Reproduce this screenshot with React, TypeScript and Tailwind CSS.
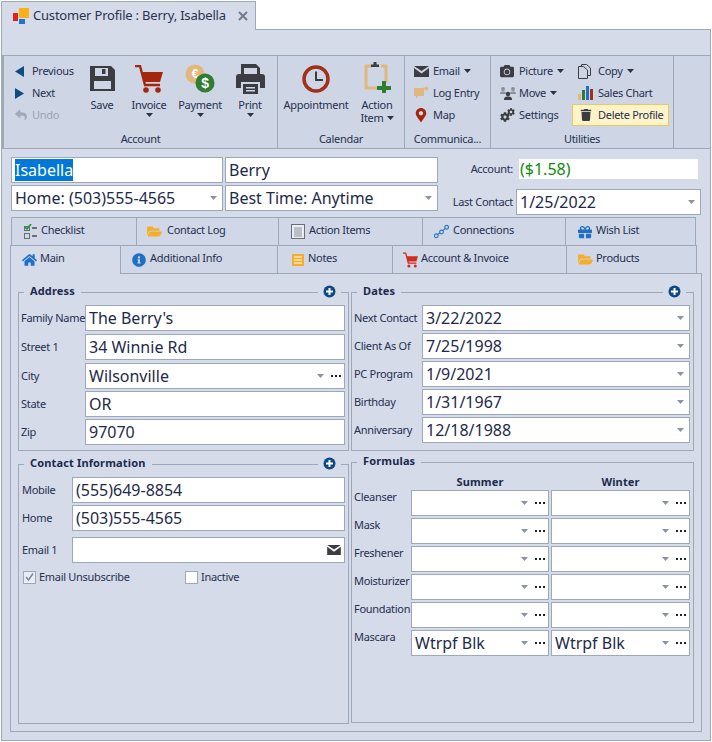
import React from "react";
import { FaHome, FaInfoCircle, FaGift, FaFolderOpen, FaReply, FaTrash, FaMapMarkerAlt, FaCamera, FaCog } from "react-icons/fa";

const Tri = ({ className = "" }: { className?: string }) => (
  <svg width="7" height="4" viewBox="0 0 7 4" className={className}><path d="M0 0h7L3.5 4z" fill="currentColor" /></svg>
);

const Cart = ({ size, color }: { size: number; color: string }) => (
  <svg width={size} height={size} viewBox="0 0 28 28">
    <path d="M0 1h5l5 19h15" fill="none" stroke={color} strokeWidth="2.400" />
    <path d="M7 7h21l-3 10H9z" fill={color} />
    <circle cx="11" cy="25" r="2.800" fill={color} />
    <circle cx="23" cy="25" r="2.800" fill={color} />
  </svg>
);
const Save = () => (
  <svg width="25" height="26" viewBox="0 0 25 26"><path fillRule="evenodd" d="M0 0h21l4 4v21H0zM5 2v8h13V2zM4 15v8h17v-8z" fill="#3b3d42" /><rect x="12" y="3" width="3.5" height="5" fill="#3b3d42" /></svg>
);
const Coins = () => (
  <svg width="30" height="29" viewBox="0 0 30 29"><circle cx="10" cy="10" r="9.5" fill="#e3b77c" /><text x="10" y="14" fontSize="12" fontWeight="700" textAnchor="middle" fill="#fff" fontFamily="Liberation Sans">€</text><circle cx="20" cy="19" r="9.5" fill="#2f7d32" /><text x="20" y="24" fontSize="14" fontWeight="700" textAnchor="middle" fill="#fff" fontFamily="Liberation Sans">$</text></svg>
);
const Printer = () => (
  <svg width="29" height="30" viewBox="0 0 29 30"><path fillRule="evenodd" d="M5 0h15l4 4v7H21V4H8v7H5z" fill="#3b3d42" /><path fillRule="evenodd" d="M3 10h23a3 3 0 0 1 3 3v11h-5v-6H5v6H0V13a3 3 0 0 1 3-3z" fill="#3b3d42" /><path fillRule="evenodd" d="M7 20h15v10H7zM10 23v1.5h9V23zM10 26v1.5h9V26z" fill="#3b3d42" /></svg>
);
const Clock = () => (
  <svg width="28" height="28" viewBox="0 0 28 28"><circle cx="14" cy="14" r="12" fill="none" stroke="#a12f1b" strokeWidth="3.5" /><path d="M14 6.5V15h7" fill="none" stroke="#3b3d42" strokeWidth="2" /></svg>
);
const ActionIcon = () => (
  <svg width="27" height="31" viewBox="0 0 27 31"><path d="M8 4H2v22h15" fill="none" stroke="#e0b77f" strokeWidth="3" /><path d="M17 4h5v17" fill="none" stroke="#e0b77f" strokeWidth="3" /><path d="M7 5V2.5h2.5V0h3v2.5H15V5z" fill="#3b3d42" /><path d="M18 19h4v5h5v4h-5v3h-4v-3h-5v-4h5z" fill="#2f7d32" /></svg>
);
const Envelope = ({ w = 15, h = 11 }: { w?: number; h?: number }) => (
  <svg width={w} height={h} viewBox="0 0 15 11"><path d="M0 2l7.500 5.500L15 2v9H0z" fill="#3b3d42" /><path d="M0 0h15L7.500 5z" fill="#3b3d42" /></svg>
);
const LogIcon = () => (
  <svg width="15" height="14" viewBox="0 0 15 14"><path d="M0 2h10v8H4l-2 3v-3H0z" fill="#e0b77f" /><path d="M12 0l1 1.5h2l-1.3 1.4.5 1.9-2.2-1-2 1 .5-1.9L9 1.5h2z" fill="#e0b77f" /></svg>
);
const People = () => (
  <svg width="16" height="14" viewBox="0 0 16 14"><circle cx="8" cy="8" r="2.2" fill="#3b3d42" /><path d="M4 14c0-3 1.500-3.500 4-3.500s4 .5 4 3.500z" fill="#3b3d42" /><circle cx="3" cy="3" r="2" fill="#8c8f96" /><circle cx="13" cy="3" r="2" fill="#8c8f96" /><path d="M0 8c0-2 1-2.500 3-2.500S6 6 6 8zM10 8c0-2 1-2.500 3-2.500s3 .5 3 2.500z" fill="#8c8f96" /></svg>
);
const Gears = () => (
  <span className="relative block w-[15px] h-[14px] text-[#3b3d42]">
    <FaCog className="absolute left-0 bottom-0" size={10} />
    <FaCog className="absolute right-0 top-0" size={8} />
  </span>
);
const CopyIcon = () => (
  <svg width="13" height="15" viewBox="0 0 13 15" fill="none" stroke="#3b3d42"><path d="M3.500 2.500V.5h5l4 3.500v7.500h-3M.5 2.500h5l4 3.500v8.500H.500z" /></svg>
);
const Bars = () => (
  <svg width="15" height="14" viewBox="0 0 15 14"><rect x="0" y="8" width="3" height="6" fill="#e0b77f" /><rect x="4" y="4" width="3" height="10" fill="#2f7d32" /><rect x="8" y="0" width="3" height="14" fill="#1f6fc4" /><rect x="12" y="3" width="3" height="11" fill="#a12f1b" /></svg>
);
const ChecklistIcon = () => (
  <svg width="14" height="15" viewBox="0 0 14 15"><rect x=".5" y="2.500" width="5" height="4" fill="none" stroke="#6b6e75" /><path d="M1 3l2 2 4-5" fill="none" stroke="#2f9a35" strokeWidth="1.800" /><rect x="8" y="3" width="5" height="2" fill="#6b6e75" /><rect x=".5" y="9.500" width="5" height="5" fill="none" stroke="#6b6e75" /><rect x="8" y="11" width="5" height="2" fill="#6b6e75" /></svg>
);
const ListIcon = () => (
  <svg width="14" height="15" viewBox="0 0 14 15"><rect x=".5" y=".5" width="13" height="14" fill="#e9edf4" stroke="#6b6e75" /><path d="M3 4h8M3 6h8M3 8h8M3 10h8M3 12h8" stroke="#8c8f96" /></svg>
);
const ConnIcon = () => (
  <svg width="16" height="15" viewBox="0 0 16 15" fill="none" stroke="#2a77c9" strokeWidth="1.200"><circle cx="2.500" cy="12" r="2" /><circle cx="8" cy="8" r="2" /><circle cx="13.500" cy="3" r="2" /><path d="M4 10.500l2.300-1.500M9.500 6.500l2.500-2.200" /></svg>
);
const NotesIcon = () => (
  <svg width="12" height="12" viewBox="0 0 12 12"><rect width="12" height="12" fill="#f4ae2c" /><path d="M2 3h8M2 6h8M2 9h8" stroke="#fff" strokeWidth="1.200" /></svg>
);
const PlusBtn = () => (
  <svg width="13" height="13" viewBox="0 0 13 13"><circle cx="6.500" cy="6.500" r="6" fill="#0d4a85" /><path d="M6.500 3v7M3 6.500h7" stroke="#fff" strokeWidth="2" /></svg>
);

const Large = ({ w, icon, label, arrow }: { w: string; icon: React.ReactNode; label: string; arrow?: boolean }) => (
  <div className={`${w} flex flex-col items-center pt-[8px]`}>
    <div className="h-[29px] flex items-center justify-center">{icon}</div>
    <div className="mt-[5px] h-[14px] leading-[14px] whitespace-nowrap">{label}</div>
    {arrow && <Tri className="mt-[1px] text-[#2b3246]" />}
  </div>
);

const Small = ({ icon, label, arrow, dim, iconW = "w-[19px]" }: { icon: React.ReactNode; label: string; arrow?: boolean; dim?: boolean; iconW?: string }) => (
  <div className={`h-[22px] flex items-center whitespace-nowrap ${dim ? "text-[#9aa2b2]" : ""}`}>
    <div className={`${iconW} flex items-center`}>{icon}</div>
    <span>{label}</span>
    {arrow && <Tri className="ml-[4px] text-[#2b3246]" />}
  </div>
);

const Group = ({ w, label, children }: { w: string; label: string; children: React.ReactNode }) => (
  <div className={`${w} h-[92px] flex flex-col border-r border-[#9ea8bb]`}>
    <div className="h-[76px] flex">{children}</div>
    <div className="text-center leading-[14px] whitespace-nowrap">{label}</div>
  </div>
);

const Field = ({ value, w = "flex-1", mt = "", drop, dots, right }: { value?: React.ReactNode; w?: string; mt?: string; drop?: boolean; dots?: boolean; right?: React.ReactNode }) => (
  <div className={`${w} h-[26px] ${mt} min-w-0 border border-[#9ea8bb] bg-white flex items-center pl-[3px] text-[16px] tracking-normal text-[#1e2a4a] whitespace-nowrap`}>
    <span className="flex-1 min-w-0">{value}</span>
    {drop && <Tri className={`${dots ? "mr-[7px]" : "mr-[5px]"} text-[#8992a6]`} />}
    {dots && <span className="mr-[3px] flex gap-[2px]"><i className="w-[2px] h-[2px] bg-[#1c2233]" /><i className="w-[2px] h-[2px] bg-[#1c2233]" /><i className="w-[2px] h-[2px] bg-[#1c2233]" /></span>}
    {right}
  </div>
);

const Row = ({ label, lw, mt = "", children }: { label: string; lw: string; mt?: string; children: React.ReactNode }) => (
  <div className={`flex items-center ${mt}`}>
    <div className={`${lw} shrink-0 whitespace-nowrap text-[#25304f]`}>{label}</div>
    {children}
  </div>
);

const GroupBox = ({ title, plus, className, children }: { title: string; plus?: boolean; className: string; children?: React.ReactNode }) => (
  <div className={`relative border border-[#9ea8bb] ${className}`}>
    <div className="absolute left-[5px] right-[7px] -top-[9px] h-[14px] flex items-center justify-between">
      <span className="bg-[#d5dbe9] px-[6px] font-bold tracking-[0.15px] text-[#1b2a4e] leading-[14px] pb-[1px]">{title}</span>
      {plus && <span className="bg-[#d5dbe9] px-[5px] flex"><PlusBtn /></span>}
    </div>
    {children}
  </div>
);

const Tab = ({ w, icon, label, active, gap = "gap-[4px]", pl }: { w: string; icon: React.ReactNode; label: string; active?: boolean; gap?: string; pl: string }) => (
  <div className={`${w} ${pl} ${gap} flex items-center border-t border-r border-[#9ea8bb] text-[#25304f] whitespace-nowrap ${active ? "bg-[#d5dbe9] h-[29px] border-l relative z-10" : "bg-[#d0d7e6] h-[28px]"}`}>
    <span className="flex items-center justify-center w-[15px] shrink-0">{icon}</span>
    <span className="pb-[3px]">{label}</span>
  </div>
);

export default function App() {
  return (
    <div className="w-[712px] h-[742px] bg-white pt-[1px] overflow-hidden text-[11px] tracking-[-0.3px] text-[#25304f] font-['Noto_Sans',sans-serif]">
      <div className="ml-[1px] w-[255px] h-[29px] -mb-[1px] relative z-10 bg-[#d5dbe9] border border-b-0 border-[#9ea8bb] flex items-center pl-[11px]">
        <svg width="16" height="16" viewBox="0 0 16 16" className="shrink-0"><rect x="0" y="5" width="5" height="8" fill="#d8261c" /><rect x="6" y="0" width="10" height="10" fill="#fbb016" /><rect x="6" y="11" width="6" height="5" fill="#1976d2" /></svg>
        <span className="ml-[4px] text-[13px] tracking-[-0.2px] text-[#2b3450] whitespace-nowrap">Customer Profile : Berry, Isabella</span>
        <svg width="10" height="10" viewBox="0 0 10 10" className="ml-[12px]"><path d="M1 1l8 8M9 1l-8 8" stroke="#737b8d" strokeWidth="2" /></svg>
      </div>

      <div className="ml-[1px] w-[710px] h-[712px] bg-[#d5dbe9] border border-[#9ea8bb] pt-[25px]">
        {/* ribbon */}
        <div className="h-[94px] bg-[#ced6e5] border-y border-l-2 border-[#9ea8bb] flex">
          <Group w="w-[274px]" label="Account">
            <div className="w-[76px] pl-[11px] pt-[4px]">
              <Small icon={<svg width="9" height="11" viewBox="0 0 9 11"><path d="M9 0v11L0 5.500z" fill="#0f4c81" /></svg>} label="Previous" iconW="w-[17px]" />
              <Small icon={<svg width="9" height="11" viewBox="0 0 9 11"><path d="M0 0v11l9-5.500z" fill="#0f4c81" /></svg>} label="Next" iconW="w-[17px]" />
              <Small dim icon={<FaReply size={12} className="text-[#a3aaba]" />} label="Undo" iconW="w-[17px]" />
            </div>
            <Large w="w-[44px]" icon={<Save />} label="Save" />
            <Large w="w-[50px]" icon={<Cart size={28} color="#a4260d" />} label="Invoice" arrow />
            <Large w="w-[52px]" icon={<Coins />} label="Payment" arrow />
            <Large w="w-[48px]" icon={<Printer />} label="Print" arrow />
          </Group>
          <Group w="w-[127px]" label="Calendar">
            <Large w="w-[76px]" icon={<Clock />} label="Appointment" />
            <div className="w-[46px] flex flex-col items-center pt-[6px]">
              <div className="h-[31px]"><ActionIcon /></div>
              <div className="mt-[5px] h-[13px] leading-[13px]">Action</div>
              <div className="h-[14px] leading-[14px] flex items-center gap-[3px]">Item <Tri className="text-[#2b3246]" /></div>
            </div>
          </Group>
          <Group w="w-[86px]" label="Communica...">
            <div className="pl-[9px] pt-[4px]">
              <Small icon={<Envelope w={15} h={11} />} label="Email" arrow />
              <Small icon={<LogIcon />} label="Log Entry" />
              <Small icon={<FaMapMarkerAlt size={14} className="text-[#a4260d]" />} label="Map" />
            </div>
          </Group>
          <Group w="w-[183px]" label="Utilities">
            <div className="w-[87px] pl-[9px] pt-[4px]">
              <Small icon={<FaCamera size={14} className="text-[#3b3d42]" />} label="Picture" arrow />
              <Small icon={<People />} label="Move" arrow />
              <Small icon={<Gears />} label="Settings" />
            </div>
            <div className="pt-[4px]">
              <Small icon={<CopyIcon />} label="Copy" arrow iconW="w-[20px]" />
              <Small icon={<Bars />} label="Sales Chart" iconW="w-[20px]" />
              <div className="-ml-[6px] w-[97px] h-[22px] pl-[5px] bg-[#fff4c9] border border-[#eec75f] flex items-center whitespace-nowrap">
                <span className="w-[20px] flex shrink-0"><FaTrash size={12} className="text-[#3b3d42] ml-[2px]" /></span>Delete Profile
              </div>
            </div>
          </Group>
        </div>

        {/* top form */}
        <div className="h-[68px] pl-[9px] pt-[8px] flex">
          <div className="w-[427px]">
            <div className="flex gap-[2px]">
              <Field w="w-[212px]" value={<span className="bg-[#0078d7] text-white">Isabella</span>} />
              <Field w="w-[213px]" value="Berry" />
            </div>
            <div className="flex gap-[2px] mt-[2px]">
              <Field w="w-[212px]" value="Home: (503)555-4565" drop />
              <Field w="w-[213px]" value="Best Time: Anytime" drop />
            </div>
          </div>
          <div className="w-[263px]">
            <div className="flex items-center h-[20px] mt-[2px]">
              <div className="w-[75px] text-right shrink-0">Account:</div>
              <div className="ml-[6px] w-[179px] h-[20px] bg-white text-[16px] tracking-normal leading-[20px] text-[#0f8a0f] pl-[1px]">($1.58)</div>
            </div>
            <div className="flex items-center mt-[10px]">
              <div className="w-[75px] text-right shrink-0">Last Contact</div>
              <Field w="w-[185px] ml-[3px]" value="1/25/2022" drop />
            </div>
          </div>
        </div>

        {/* tabs */}
        <div className="pl-[9px] flex">
          <Tab w="w-[126px] border-l" pl="pl-[11px]" gap="gap-[3px]" icon={<ChecklistIcon />} label="Checklist" />
          <Tab w="w-[142px]" pl="pl-[10px]" gap="gap-[5px]" icon={<FaFolderOpen size={15} className="text-[#f4ae2c]" />} label="Contact Log" />
          <Tab w="w-[144px]" pl="pl-[11px]" icon={<ListIcon />} label="Action Items" />
          <Tab w="w-[143px]" pl="pl-[11px]" icon={<ConnIcon />} label="Connections" />
          <Tab w="w-[130px]" pl="pl-[11px]" gap="gap-[4px]" icon={<FaGift size={14} className="text-[#1f6fc4]" />} label="Wish List" />
        </div>
        <div className="pl-[8px] flex h-[28px] items-start">
          <Tab active w="w-[111px]" pl="pl-[11px]" gap="gap-[3px]" icon={<FaHome size={16} className="text-[#1f6fc4]" />} label="Main" />
          <Tab w="w-[157px]" pl="pl-[10px]" gap="gap-[4px]" icon={<FaInfoCircle size={14} className="text-[#1f6fc4]" />} label="Additional Info" />
          <Tab w="w-[115px]" pl="pl-[12px]" gap="gap-[3px]" icon={<NotesIcon />} label="Notes" />
          <Tab w="w-[174px]" pl="pl-[10px]" gap="gap-[3px]" icon={<Cart size={16} color="#d32a1e" />} label="Account & Invoice" />
          <Tab w="w-[130px]" pl="pl-[11px]" gap="gap-[3px]" icon={<FaFolderOpen size={15} className="text-[#f4ae2c]" />} label="Products" />
        </div>

        {/* panel */}
        <div className="ml-[8px] w-[692px] h-[459px] border border-[#9ea8bb] pl-[7px] pt-[18px] flex gap-[2px]">
          <div className="w-[331px]">
            <GroupBox title="Address" plus className="h-[159px] pl-[2px] pr-[3px] pt-[12px]">
              <Row label="Family Name" lw="w-[64px]"><Field value="The Berry's" /></Row>
              <Row label="Street 1" lw="w-[64px]" mt="mt-[3px]"><Field value="34 Winnie Rd" /></Row>
              <Row label="City" lw="w-[64px]" mt="mt-[3px]"><Field value="Wilsonville" drop dots /></Row>
              <Row label="State" lw="w-[64px]" mt="mt-[2px]"><Field value="OR" /></Row>
              <Row label="Zip" lw="w-[64px]" mt="mt-[2px]"><Field value="97070" /></Row>
            </GroupBox>
            <GroupBox title="Contact Information" plus className="mt-[13px] h-[260px] pl-[3px] pr-[3px] pt-[12px]">
              <Row label="Mobile" lw="w-[50px]"><Field value="(555)649-8854" /></Row>
              <Row label="Home" lw="w-[50px]" mt="mt-[2px]"><Field value="(503)555-4565" /></Row>
              <Row label="Email 1" lw="w-[50px]" mt="mt-[6px]"><Field right={<span className="mr-[3px] flex"><Envelope w={14} h={10} /></span>} /></Row>
              <div className="flex items-center mt-[7px] pl-[1px] h-[14px]">
                <span className="w-[13px] h-[13px] border border-[#9ea8bb] bg-[#e9edf4] flex items-center justify-center"><svg width="9" height="8" viewBox="0 0 9 8"><path d="M1 4l2.500 3L8 .5" fill="none" stroke="#7d8798" strokeWidth="1.500" /></svg></span>
                <span className="ml-[3px] w-[146px]">Email Unsubscribe</span>
                <span className="w-[13px] h-[13px] border border-[#9ea8bb] bg-white" />
                <span className="ml-[3px]">Inactive</span>
              </div>
            </GroupBox>
          </div>
          <div className="w-[343px]">
            <GroupBox title="Dates" plus className="h-[159px] pl-[2px] pr-[3px] pt-[12px]">
              {[["Next Contact", "3/22/2022"], ["Client As Of", "7/25/1998"], ["PC Program", "1/9/2021"], ["Birthday", "1/31/1967"], ["Anniversary", "12/18/1988"]].map(([l, v], i) => (
                <Row key={l} label={l} lw="w-[68px]" mt={i ? "mt-[2px]" : ""}><Field value={v} drop /></Row>
              ))}
            </GroupBox>
            <GroupBox title="Formulas" className="mt-[11px] h-[261px] pl-[2px] pr-[3px]">
              <div className="flex pl-[57px] pt-[12px] h-[27px] font-bold tracking-[0.15px] text-[#1b2a4e] leading-[14px]">
                <span className="w-[138px] text-center">Summer</span>
                <span className="w-[139px] ml-[2px] text-center">Winter</span>
              </div>
              {[["Cleanser", "", ""], ["Mask", "", ""], ["Freshener", "", ""], ["Moisturizer", "", ""], ["Foundation", "", ""], ["Mascara", "Wtrpf Blk", "Wtrpf Blk"]].map(([l, a, b], i) => (
                <div key={l} className={`flex items-start ${i ? "mt-[2px]" : ""}`}>
                  <div className="w-[57px] shrink-0 whitespace-nowrap leading-[14px]">{l}</div>
                  <div className="flex gap-[2px]">
                    <Field w="w-[138px]" value={a} drop dots />
                    <Field w="w-[139px]" value={b} drop dots />
                  </div>
                </div>
              ))}
            </GroupBox>
          </div>
        </div>
      </div>
    </div>
  );
}
